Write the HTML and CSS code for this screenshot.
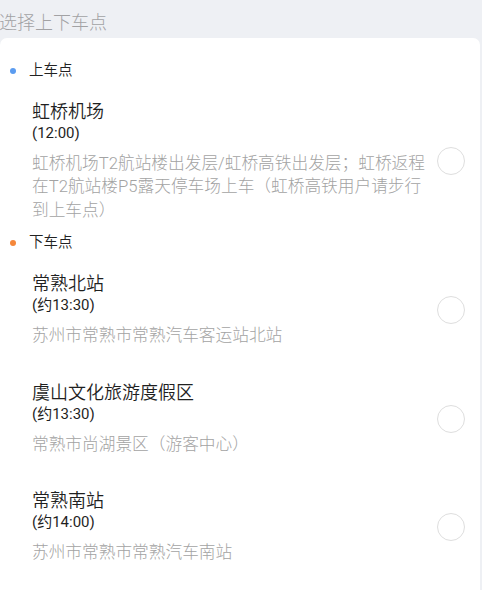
FILE: index.html
```html
<!DOCTYPE html>
<html lang="zh-CN">
<head>
<meta charset="utf-8">
<title>选择上下车点</title>
<link rel="stylesheet" href="styles.css">
</head>
<body>
<div class="page">
  <header class="page-title">选择上下车点</header>
  <main class="card">
    <section class="group">
      <div class="group-label"><span class="dot dot-up"></span>上车点</div>
      <div class="stop">
        <div class="stop-info">
          <div class="stop-name">虹桥机场</div>
          <div class="stop-time">(12:00)</div>
          <div class="stop-addr">虹桥机场T2航站楼出发层/虹桥高铁出发层；虹桥返程在T2航站楼P5露天停车场上车（虹桥高铁用户请步行到上车点）</div>
        </div>
        <span class="radio"></span>
      </div>
    </section>
    <section class="group group-down">
      <div class="group-label"><span class="dot dot-down"></span>下车点</div>
      <div class="stop">
        <div class="stop-info">
          <div class="stop-name">常熟北站</div>
          <div class="stop-time">(约13:30)</div>
          <div class="stop-addr">苏州市常熟市常熟汽车客运站北站</div>
        </div>
        <span class="radio"></span>
      </div>
      <div class="stop">
        <div class="stop-info">
          <div class="stop-name">虞山文化旅游度假区</div>
          <div class="stop-time">(约13:30)</div>
          <div class="stop-addr">常熟市尚湖景区（游客中心）</div>
        </div>
        <span class="radio"></span>
      </div>
      <div class="stop">
        <div class="stop-info">
          <div class="stop-name">常熟南站</div>
          <div class="stop-time">(约14:00)</div>
          <div class="stop-addr">苏州市常熟市常熟汽车南站</div>
        </div>
        <span class="radio"></span>
      </div>
    </section>
  </main>
</div>
</body>
</html>
```

FILE: styles.css
```css
html, body {
  margin: 0;
  padding: 0;
  background: #eef0f4;
  font-family: Roboto, "Noto Sans CJK SC", sans-serif;
}

.page {
  display: flex;
  flex-direction: column;
  min-height: 590px;
}

.page-title {
  font-size: 18px;
  line-height: 24px;
  color: #a2a2a4;
  font-weight: 300;
  padding: 11px 0 3px 0;
  margin-left: -1px;
}

.card {
  flex: 1;
  background: #ffffff;
  margin-right: 2px;
  border-radius: 7px 7px 0 0;
  padding-top: 22.5px;
}

.group-down {
  margin-top: -3px;
}

.group-label {
  display: flex;
  align-items: center;
  font-size: 14.5px;
  line-height: 20px;
  font-weight: 350;
  color: #222;
  padding-left: 10px;
}

.dot {
  width: 6px;
  height: 6px;
  border-radius: 50%;
  margin-right: 13px;
}

.dot-up { background: #5b9cf0; }
.dot-down { background: #f5873a; }

.stop {
  display: flex;
  align-items: center;
  padding: 20px 15px 14px 32px;
}

.stop-info {
  flex: 1;
  min-width: 0;
  padding-right: 6px;
}

.stop-name {
  font-size: 18px;
  line-height: 22px;
  font-weight: 350;
  color: #1f1f1f;
}

.stop-time {
  font-size: 15px;
  line-height: 21px;
  color: #1f1f1f;
}

.stop-addr {
  margin-top: 8px;
  font-size: 16.7px;
  line-height: 23.5px;
  color: #a3a3a3;
  font-weight: 300;
}

.radio {
  flex: none;
  width: 26px;
  height: 26px;
  border: 1.5px solid #dedede;
  border-radius: 50%;
}
```
